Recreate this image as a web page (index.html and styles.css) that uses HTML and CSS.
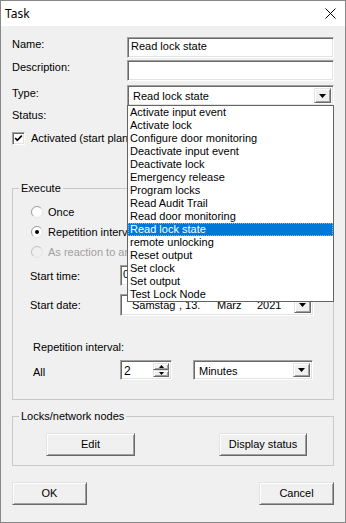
FILE: index.html
```html
<!DOCTYPE html>
<html>
<head>
    <title>Task</title>
    <link rel="stylesheet" href="styles.css">
</head>
<body>
<div class="window">
    <div class="titlebar">
        <span class="title">Task</span>
        <svg class="close" width="11" height="11" viewBox="0 0 11 11"><path d="M0.5 0.5 L10.5 10.5 M10.5 0.5 L0.5 10.5" stroke="#000" stroke-width="1" fill="none"/></svg>
    </div>

    <div class="content">
        <div class="row row-edit">
            <span class="field-label">Name:</span>
            <div class="edit sunken">Read lock state</div>
        </div>
        <div class="row row-edit row-desc">
            <span class="field-label">Description:</span>
            <div class="edit sunken"></div>
        </div>
        <div class="row row-edit row-type">
            <span class="field-label type-label">Type:</span>
            <div class="combo sunken type-combo">
                <span class="combo-text">Read lock state</span>
                <span class="combo-btn raised"><svg width="7" height="4" viewBox="0 0 7 4"><path d="M0 0h7l-3.5 4z"/></svg></span>

                <!-- open dropdown list -->
                <div class="dropdown">
                    <div class="item">Activate input event</div>
                    <div class="item">Activate lock</div>
                    <div class="item">Configure door monitoring</div>
                    <div class="item">Deactivate input event</div>
                    <div class="item">Deactivate lock</div>
                    <div class="item">Emergency release</div>
                    <div class="item">Program locks</div>
                    <div class="item">Read Audit Trail</div>
                    <div class="item">Read door monitoring</div>
                    <div class="item selected">Read lock state</div>
                    <div class="item">remote unlocking</div>
                    <div class="item">Reset output</div>
                    <div class="item">Set clock</div>
                    <div class="item">Set output</div>
                    <div class="item">Test Lock Node</div>
                </div>
            </div>
        </div>
        <div class="row row-status">
            <span class="field-label">Status:</span>
        </div>
        <div class="row row-check">
            <span class="checkbox sunken"><svg width="9" height="9" viewBox="0 0 9 9"><polyline points="1.2,4 3.3,6.3 7.8,1.6" fill="none" stroke="#000" stroke-width="1.7"/></svg></span>
            <span class="check-label">Activated (start planning immediately)</span>
        </div>

        <fieldset class="group group-execute">
            <legend>Execute</legend>
            <div class="group-body">
                <div class="radio-row">
                    <svg class="radio" width="12" height="12" viewBox="0 0 12 12"><circle cx="6" cy="6" r="5.5" fill="#fff" stroke="#e3e3e3"/><path d="M2.1 9.9 A5.5 5.5 0 0 1 9.9 2.1" fill="none" stroke="#a0a0a0"/></svg>
                    <span>Once</span>
                </div>
                <div class="radio-row">
                    <svg class="radio" width="12" height="12" viewBox="0 0 12 12"><circle cx="6" cy="6" r="5.5" fill="#fff" stroke="#e3e3e3"/><path d="M2.1 9.9 A5.5 5.5 0 0 1 9.9 2.1" fill="none" stroke="#a0a0a0"/><circle cx="6" cy="6" r="2" fill="#000"/></svg>
                    <span>Repetition interval</span>
                </div>
                <div class="radio-row disabled">
                    <svg class="radio" width="12" height="12" viewBox="0 0 12 12"><circle cx="6" cy="6" r="5.5" fill="#f0f0f0" stroke="#e3e3e3"/><path d="M2.1 9.9 A5.5 5.5 0 0 1 9.9 2.1" fill="none" stroke="#c4c4c4"/></svg>
                    <span>As reaction to an event</span>
                </div>

                <div class="row row-time">
                    <span class="sub-label">Start time:</span>
                    <div class="edit sunken time-box">09:00:00</div>
                </div>
                <div class="row row-date">
                    <span class="sub-label">Start date:</span>
                    <div class="combo sunken date-box">
                        <span class="combo-text date-text"><span class="d-day">Samstag</span><span class="d-num">, 13.</span><span class="d-month">März</span><span>2021</span></span>
                        <span class="combo-btn raised"><svg width="7" height="4" viewBox="0 0 7 4"><path d="M0 0h7l-3.5 4z"/></svg></span>
                    </div>
                </div>

                <div class="interval-label">Repetition interval:</div>
                <div class="row row-all">
                    <span class="all-label">All</span>
                    <div class="spin sunken">
                        <span class="spin-text">2</span>
                        <span class="spin-btns">
                            <span class="spin-btn raised"><svg width="5" height="3" viewBox="0 0 5 3"><path d="M2.5 0L5 3H0z"/></svg></span>
                            <span class="spin-btn raised"><svg width="5" height="3" viewBox="0 0 5 3"><path d="M0 0h5L2.5 3z"/></svg></span>
                        </span>
                    </div>
                    <div class="combo sunken unit-combo">
                        <span class="combo-text">Minutes</span>
                        <span class="combo-btn raised"><svg width="7" height="4" viewBox="0 0 7 4"><path d="M0 0h7l-3.5 4z"/></svg></span>
                    </div>
                </div>
            </div>
        </fieldset>

        <fieldset class="group group-locks">
            <legend>Locks/network nodes</legend>
            <div class="group-body locks-body">
                <div class="button raised btn-edit">Edit</div>
                <div class="button raised btn-status">Display status</div>
            </div>
        </fieldset>

        <div class="dialog-buttons">
            <div class="button raised btn-dialog">OK</div>
            <div class="button raised btn-dialog">Cancel</div>
        </div>
    </div>
</div>
</body>
</html>
```

FILE: styles.css
```css
body {
    margin: 0;
    font-family: "Liberation Sans", Arial, sans-serif;
    font-size: 11px;
    color: #000;
}
.window {
    width: 346px;
    height: 523px;
    box-sizing: border-box;
    border: 1px solid #888;
    background: #f0f0f0;
    overflow: hidden;
}
.titlebar {
    height: 25px;
    background: #fff;
    display: flex;
    align-items: center;
    justify-content: space-between;
    padding: 0 9px 0 4px;
}
.title {
    font-family: "Noto Sans", "Open Sans", sans-serif;
    font-size: 12px;
}
.content {
    padding: 11px 11px 0;
}

/* 3d borders */
.sunken {
    box-sizing: border-box;
    background: #fff;
    border: 1px solid;
    border-color: #a0a0a0 #fff #fff #a0a0a0;
    box-shadow: inset 1px 1px #696969, inset -1px -1px #e3e3e3;
}
.raised {
    box-sizing: border-box;
    background: #f0f0f0;
    border: 1px solid;
    border-color: #e3e3e3 #696969 #696969 #e3e3e3;
    box-shadow: inset 1px 1px #fff, inset -1px -1px #a0a0a0;
}

.row {
    display: flex;
}
.row-edit {
    height: 21px;
}
.row-desc {
    margin-top: 2px;
}
.row-type {
    margin-top: 4px;
}
.field-label {
    width: 115px;
    line-height: 13px;
    padding-top: 1px;
}
.type-label {
    padding-top: 2px;
}
.edit {
    flex: 1;
    line-height: 17px;
    padding-left: 3px;
    white-space: nowrap;
    overflow: hidden;
}
.combo {
    flex: 1;
    display: flex;
    padding: 2px;
    background: #fff;
}
.combo-text {
    flex: 1;
    line-height: 17px;
    padding-left: 3px;
    white-space: nowrap;
}
.combo-btn {
    width: 17px;
    display: flex;
    align-items: center;
    justify-content: center;
}
.type-combo {
    position: relative;
}
.dropdown {
    position: absolute;
    top: 100%;
    left: -1px;
    right: -1px;
    z-index: 10;
    background: #fff;
    border: 1px solid #646464;
}
.item {
    height: 13px;
    line-height: 13px;
    padding-left: 2px;
    white-space: nowrap;
}
.item.selected {
    background: #0078d7;
    color: #fff;
    outline: 1px dotted #f0a030;
    outline-offset: -1px;
}

.row-status {
    height: 13px;
    margin-top: 2px;
    line-height: 13px;
}
.row-check {
    height: 13px;
    margin-top: 11px;
    align-items: center;
    white-space: nowrap;
}
.checkbox {
    width: 13px;
    height: 13px;
    padding: 1px;
    display: flex;
}
.check-label {
    margin-left: 6px;
    line-height: 13px;
}

.group {
    margin: 0;
    padding: 0;
    border: 1px solid #c9c9c9;
    min-inline-size: 0;
}
.group legend {
    margin-left: 6px;
    padding: 0 2px;
    line-height: 13px;
}
.group-execute {
    margin-top: 37px;
}
.group-execute .group-body {
    padding: 10px 0 19px 17px;
}
.radio-row {
    display: flex;
    align-items: center;
    height: 14px;
    margin: 0 0 6px 1px;
    white-space: nowrap;
}
.radio {
    margin-right: 5px;
}
.disabled {
    color: #a0a0a0;
}
.row-time {
    height: 21px;
    margin-top: 6px;
    align-items: center;
}
.sub-label {
    width: 90px;
}
.time-box {
    flex: none;
    width: 96px;
    height: 21px;
    padding-left: 2px;
}
.row-date {
    height: 22px;
    margin-top: 8px;
    align-items: center;
}
.date-box {
    flex: none;
    width: 194px;
    height: 22px;
}
.date-text {
    padding-left: 9px;
}
.d-day {
    display: inline-block;
    width: 47px;
}
.d-num {
    display: inline-block;
    width: 38px;
}
.d-month {
    display: inline-block;
    width: 40px;
}
.interval-label {
    margin: 25px 0 0 3px;
    line-height: 13px;
}
.row-all {
    height: 20px;
    margin-top: 6px;
    align-items: center;
}
.all-label {
    width: 87px;
    margin-left: 3px;
    padding-top: 3px;
}
.spin {
    width: 52px;
    height: 20px;
    display: flex;
    padding: 2px;
}
.spin-text {
    flex: 1;
    line-height: 16px;
    padding-left: 1px;
    font-size: 12px;
}
.spin-btns {
    width: 16px;
    display: flex;
    flex-direction: column;
}
.spin-btn {
    flex: 1;
    display: flex;
    align-items: center;
    justify-content: center;
}
.unit-combo {
    flex: none;
    width: 120px;
    height: 20px;
    margin-left: 21px;
}
.unit-combo .combo-text {
    line-height: 16px;
}

.group-locks {
    margin-top: 10px;
}
.locks-body {
    display: flex;
    justify-content: space-between;
    padding: 10px 26px 9px 33px;
}
.button {
    height: 23px;
    line-height: 21px;
    text-align: center;
}
.btn-edit {
    width: 89px;
}
.btn-status {
    width: 88px;
}
.dialog-buttons {
    display: flex;
    justify-content: space-between;
    margin-top: 16px;
}
.btn-dialog {
    width: 75px;
}
```
